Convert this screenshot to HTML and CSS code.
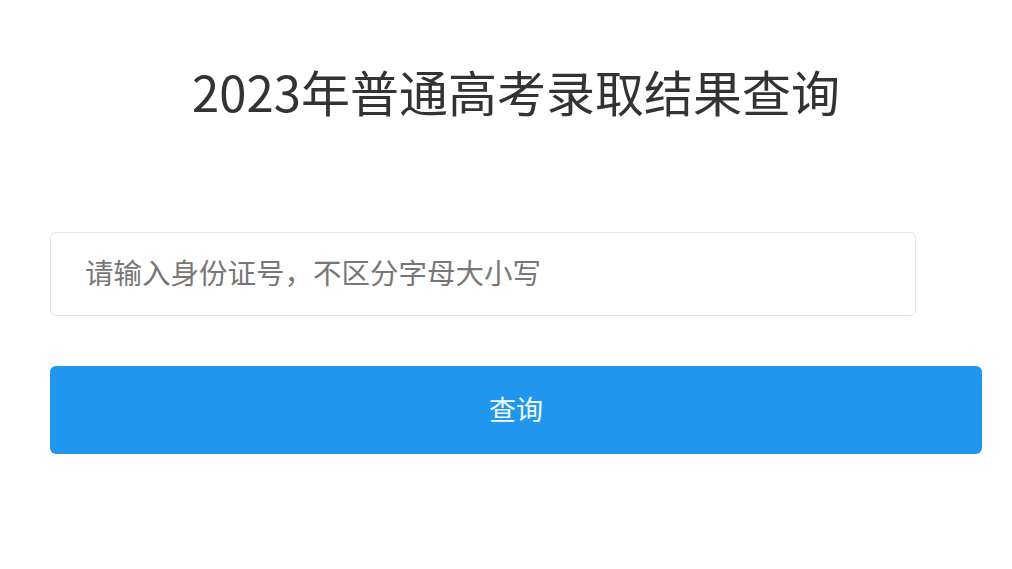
FILE: index.html
```html
<!DOCTYPE html>
<html lang="zh-CN">
<head>
  <meta charset="utf-8">
  <title>2023年普通高考录取结果查询</title>
  <link rel="stylesheet" href="styles.css">
</head>
<body>
  <div class="page">
    <h1 class="title">2023年普通高考录取结果查询</h1>
    <form class="query" onsubmit="return false">
      <input class="query-input" type="text" placeholder="请输入身份证号，不区分字母大小写">
      <button class="query-btn" type="submit">查询</button>
    </form>
  </div>
</body>
</html>
```

FILE: styles.css
```css
body {
  margin: 0;
  background: #fff;
  font-family: "Noto Sans CJK SC", "Noto Sans", sans-serif;
}

.page {
  padding: 0 30px 0 50px;
}

.title {
  margin: 60px 0 0;
  font-size: 49px;
  line-height: 62px;
  font-weight: 400;
  color: #333;
  text-align: center;
}

.query {
  display: flex;
  flex-direction: column;
  align-items: flex-start;
  gap: 50px;
  margin-top: 110px;
}

.query-input {
  box-sizing: border-box;
  width: 866px;
  height: 84px;
  padding: 0 20px 5px 34px;
  border: 1px solid #e4e4e4;
  border-radius: 6px;
  font-family: inherit;
  font-size: 28.5px;
  color: #333;
  outline: none;
}

.query-input::placeholder {
  color: #777;
}

.query-btn {
  width: 100%;
  height: 88px;
  padding-bottom: 4px;
  border: none;
  border-radius: 6px;
  background: #2196ee;
  color: #f2fdff;
  font-family: inherit;
  font-size: 27px;
  cursor: pointer;
}
```
